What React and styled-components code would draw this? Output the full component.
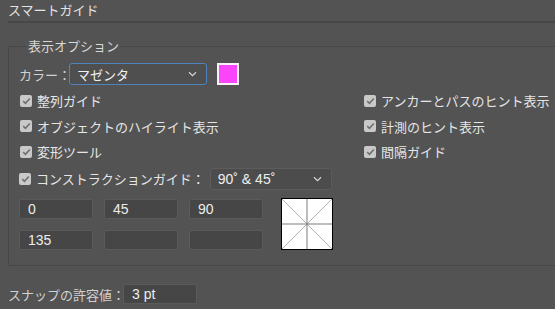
import React from "react";
import styled, { createGlobalStyle } from "styled-components";

const Global = createGlobalStyle`
  html, body { margin: 0; padding: 0; background: #535353; }
  body {
    font-family: "Noto Sans CJK JP", "Liberation Sans", sans-serif;
    font-size: 13px;
    color: #dedede;
  }
`;

const Page = styled.div`
  width: 555px;
  height: 309px;
  overflow: hidden;
  padding-left: 8px;
  box-sizing: border-box;
`;

const Header = styled.div`
  height: 21px;
  line-height: 20px;
  border-bottom: 2px solid #474747;
  color: #e2e2e2;
`;

const Group = styled.fieldset`
  margin: 15px 0 0 0;
  padding: 7px 0 0 10px;
  height: 228px;
  box-sizing: border-box;
  border: 1px solid #474747;
  border-right: none;
  min-width: 0;
`;

const Legend = styled.legend`
  padding: 0 1px;
  margin-left: 8px;
  line-height: 16px;
  color: #d8d8d8;
`;

const Row = styled.div`
  display: flex;
  align-items: center;
  height: ${(p) => p.$h || 22}px;
  margin-top: ${(p) => p.$mt || 0}px;
`;

const Label = styled.span`
  color: #d2d2d2;
  margin-right: ${(p) => p.$mr || 0}px;
  white-space: nowrap;
`;

const Select = styled.div`
  width: ${(p) => p.$w}px;
  height: ${(p) => p.$h}px;
  box-sizing: border-box;
  border: 1px solid ${(p) => (p.$focus ? "#4f84bd" : "#5c5c5c")};
  border-radius: 3px;
  background: ${(p) => (p.$focus ? "#4f4f4f" : "#4c4c4c")};
  display: flex;
  align-items: center;
  justify-content: space-between;
  padding: 0 9px 0 7px;
  color: #efefef;
  margin-left: ${(p) => p.$ml || 0}px;
`;

const Swatch = styled.div`
  width: 22px;
  height: 22px;
  box-sizing: border-box;
  border: 2px solid #f4f4f4;
  background: #fb45fb;
  margin-left: 10px;
`;

const Checks = styled.div`
  display: grid;
  grid-template-columns: 344px 1fr;
  grid-auto-rows: 25.5px;
  margin-top: 3px;
  padding-left: 1px;
`;

const CheckRow = styled.div`
  display: flex;
  align-items: center;
  color: #e6e6e6;
  white-space: nowrap;
`;

const Box = styled.span`
  width: 12px;
  height: 12px;
  border-radius: 2px;
  background: #c9c9c9;
  margin-right: 5px;
  display: flex;
  align-items: center;
  justify-content: center;
  flex-shrink: 0;
`;

const Fields = styled.div`
  display: flex;
  gap: 18px;
  margin-top: 8px;
`;

const FieldGrid = styled.div`
  display: grid;
  grid-template-columns: repeat(3, 74px);
  grid-auto-rows: 20px;
  column-gap: 11px;
  row-gap: 11px;
  padding-top: 1px;
`;

const Field = styled.div`
  width: ${(p) => p.$w || 74}px;
  height: 20px;
  box-sizing: border-box;
  background: #464646;
  border: 1px solid #5a5a5a;
  border-radius: 2px;
  padding-left: 8px;
  line-height: 18px;
  color: #ececec;
  font-family: "Liberation Sans", "Noto Sans CJK JP", sans-serif;
  font-size: 14px;
`;

const Preview = styled.div`
  width: 52px;
  height: 52px;
  box-sizing: border-box;
  border: 1px solid #000;
  background: #fff;
`;

const Snap = styled.div`
  display: flex;
  align-items: center;
  height: 20px;
  margin-top: 18px;
`;

const Check = ({ children }) => (
  <CheckRow>
    <Box>
      <svg width="9" height="8" viewBox="0 0 9 8">
        <path d="M1.2 4.2 L3.5 6.3 L7.8 1.5" fill="none" stroke="#707070" strokeWidth="1.6" />
      </svg>
    </Box>
    {children}
  </CheckRow>
);

const Chevron = () => (
  <svg width="9" height="6" viewBox="0 0 9 6">
    <path d="M1 1.2 L4.5 4.6 L8 1.2" fill="none" stroke="#d6d6d6" strokeWidth="1.2" />
  </svg>
);

export default function App() {
  return (
    <Page>
      <Global />
      <Header>スマートガイド</Header>
      <Group>
        <Legend>表示オプション</Legend>
        <Row $h={22} $mt={2}>
          <Label $mr={-2}>カラー：</Label>
          <Select $w={138} $h={22} $focus>
            <span>マゼンタ</span>
            <Chevron />
          </Select>
          <Swatch />
        </Row>
        <Checks>
          <Check>整列ガイド</Check>
          <Check>アンカーとパスのヒント表示</Check>
          <Check>オブジェクトのハイライト表示</Check>
          <Check>計測のヒント表示</Check>
          <Check>変形ツール</Check>
          <Check>間隔ガイド</Check>
        </Checks>
        <Row $h={22} $mt={3}>
          <Check>コンストラクションガイド：</Check>
          <Select $w={122} $h={22} $ml={5}>
            <span style={{ fontFamily: "'Liberation Sans', sans-serif", fontSize: 14 }}>90˚ &amp; 45˚</span>
            <Chevron />
          </Select>
        </Row>
        <Fields>
          <FieldGrid>
            <Field>0</Field>
            <Field>45</Field>
            <Field>90</Field>
            <Field>135</Field>
            <Field />
            <Field />
          </FieldGrid>
          <Preview>
            <svg width="50" height="50" viewBox="0 0 50 50">
              <line x1="0" y1="0" x2="50" y2="50" stroke="#9a9a9a" strokeWidth="0.8" />
              <line x1="50" y1="0" x2="0" y2="50" stroke="#9a9a9a" strokeWidth="0.8" />
              <line x1="25" y1="0" x2="25" y2="50" stroke="#bdbdbd" strokeWidth="2" />
              <line x1="0" y1="25" x2="50" y2="25" stroke="#bdbdbd" strokeWidth="2" />
              <circle cx="25" cy="25" r="1" fill="#777" />
            </svg>
          </Preview>
        </Fields>
      </Group>
      <Snap>
        <Label $mr={-2}>スナップの許容値：</Label>
        <Field $w={74}>3 pt</Field>
      </Snap>
    </Page>
  );
}
